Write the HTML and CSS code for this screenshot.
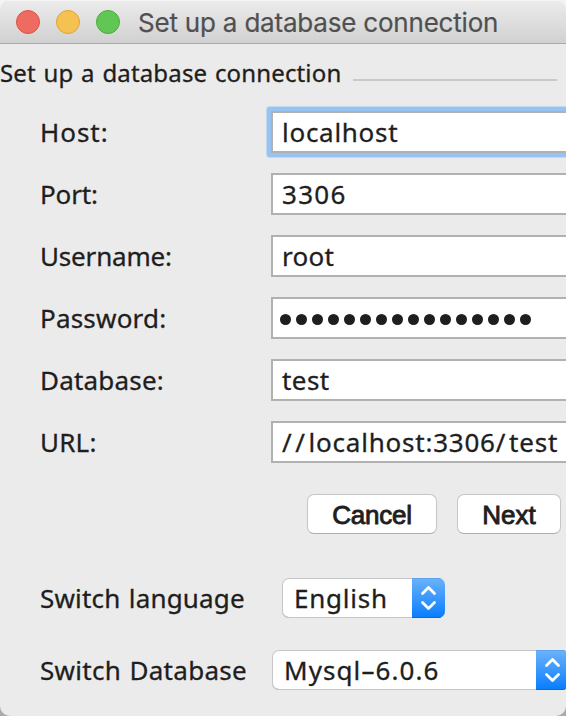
FILE: index.html
```html
<!DOCTYPE html>
<html lang="en">
<head>
<meta charset="utf-8">
<title>Set up a database connection</title>
<link rel="stylesheet" href="styles.css">
</head>
<body>
<div class="window">
  <header class="titlebar">
    <span class="light close"></span>
    <span class="light minimize"></span>
    <span class="light maximize"></span>
    <span class="title">Set up a database connection</span>
  </header>
  <div class="section">
    <span class="section-title">Set up a database connection</span>
    <span class="rule"></span>
  </div>
  <main class="form">
    <div class="row"><span class="label host-label">Host:</span><div class="field focused host">localhost</div></div>
    <div class="row"><span class="label port-label">Port:</span><div class="field port">3306</div></div>
    <div class="row"><span class="label user-label">Username:</span><div class="field user">root</div></div>
    <div class="row"><span class="label">Password:</span><div class="field password"><i></i><i></i><i></i><i></i><i></i><i></i><i></i><i></i><i></i><i></i><i></i><i></i><i></i><i></i><i></i><i></i></div></div>
    <div class="row"><span class="label">Database:</span><div class="field database">test</div></div>
    <div class="row"><span class="label">URL:</span><div class="field url"><span class="slash">//</span>localhost:3306<span class="slash">/</span>test</div></div>
  </main>
  <div class="buttons">
    <div class="button cancel">Cancel</div>
    <div class="button next">Next</div>
  </div>
  <div class="switch language">
    <span class="switch-label">Switch language</span>
    <div class="select">
      <span class="value">English</span>
      <span class="stepper"><svg width="33" height="40" viewBox="0 0 33 40"><path d="M10.5 15.5l6-6 6 6M10.5 24.5l6 6 6-6"/></svg></span>
    </div>
  </div>
  <div class="switch engine">
    <span class="switch-label">Switch Database</span>
    <div class="select">
      <span class="value">Mysql–6.0.6</span>
      <span class="stepper"><svg width="33" height="40" viewBox="0 0 33 40"><path d="M10.5 15.5l6-6 6 6M10.5 24.5l6 6 6-6"/></svg></span>
    </div>
  </div>
</div>
</body>
</html>
```
FILE: styles.css
```css
* { box-sizing: border-box; }
body {
  margin: 0;
  width: 566px;
  height: 716px;
  overflow: hidden;
  background: linear-gradient(#f4f4f4, #f4f4f4 50%, #a9a9a9 50%);
  font: 26px/40px "Noto Sans", "Liberation Sans", sans-serif;
  color: #1e1e1e;
  -webkit-text-stroke: 0.3px #1e1e1e;
}
.window {
  height: 716px;
  overflow: hidden;
  border-radius: 10px;
  background: #ebebeb;
  white-space: nowrap;
}
.titlebar {
  display: flex;
  align-items: center;
  gap: 16px;
  height: 44px;
  padding-left: 16px;
  border-bottom: 1px solid #ababab;
  background: linear-gradient(#ececec, #d1d1d1);
  box-shadow: inset 0 1px #f5f5f5;
}
.light {
  width: 24px;
  height: 24px;
  border-radius: 50%;
  border: 1px solid;
}
.close { background: #ed6b60; border-color: #dc5348; }
.minimize { background: #f5c151; border-color: #dea33a; }
.maximize { background: #62c655; border-color: #4cac3d; }
.title {
  margin: 2px 0 0 2px;
  font-family: Inter, sans-serif;
  letter-spacing: -0.2px;
  color: #505050;
  -webkit-text-stroke: 0.2px #505050;
}
.section {
  display: flex;
  align-items: center;
  height: 58px;
  padding-right: 9px;
}
.section-title {
  width: 352px;
  font-size: 24px;
  letter-spacing: 0.15px;
  word-spacing: 1.3px;
}
.rule { flex: 1; height: 2px; margin: 14px 0 0 1px; background: #c9c9c9; }
.form {
  display: grid;
  gap: 20px;
  margin-top: 9px;
  padding-left: 40px;
}
.row { display: flex; height: 42px; }
.label { width: 231px; line-height: 42px; letter-spacing: 0.2px; }
.host-label { letter-spacing: 0.95px; }
.port-label { letter-spacing: -0.15px; }
.user-label { letter-spacing: -0.18px; }
.field {
  flex: 1;
  height: 42px;
  padding-left: 9px;
  border: 2px solid #b1b1b1;
  border-right: 0;
  background: #fff;
  line-height: 38px;
}
.focused { box-shadow: 0 0 0 4px #97c3f3, 0 0 0 5px #c4d8ee; border-radius: 1px; }
.host { letter-spacing: 0.72px; }
.port { letter-spacing: 1.3px; }
.user { letter-spacing: 0.3px; }
.database { letter-spacing: 0.45px; }
.url { letter-spacing: 0.78px; }
.slash { letter-spacing: 3.6px; }
.password { display: flex; align-items: center; gap: 5px; padding: 3px 0 0 7px; }
.password i { width: 11px; height: 11px; border-radius: 50%; background: #1e1e1e; }
.buttons {
  display: flex;
  gap: 20px;
  margin: 31px 0 0 307px;
}
.button {
  height: 40px;
  border: 1px solid #c6c6c6;
  border-bottom-color: #adadad;
  border-radius: 7px;
  background: #fff;
  font-family: "Liberation Sans", sans-serif;
  line-height: 41px;
  text-align: center;
  -webkit-text-stroke: 0.9px #1e1e1e;
}
.cancel { width: 130px; letter-spacing: -0.2px; }
.next { width: 104px; }
.switch { display: flex; height: 40px; padding-left: 40px; }
.language { margin-top: 44px; }
.engine { margin-top: 32px; }
.switch-label { flex: none; width: 242px; letter-spacing: 0.18px; word-spacing: 1.4px; }
.engine .switch-label { width: 232px; letter-spacing: 0.28px; }
.select {
  display: flex;
  flex: none;
  width: 163px;
  border-radius: 7px;
  overflow: hidden;
  background: #fff;
  box-shadow: inset 0 0 0 1px #c6c6c6, inset 0 -1px #adadad;
}
.engine .select { width: 297px; }
.value { flex: 1; padding-left: 12px; letter-spacing: 0.75px; }
.engine .value { letter-spacing: 1.08px; }
.stepper {
  width: 33px;
  height: 40px;
  background: linear-gradient(#6cb3fa, #077dff);
  box-shadow: inset 0 1px #5ba3ee, inset 0 -1px #0368ea;
}
.stepper svg {
  display: block;
  fill: none;
  stroke: #fff;
  stroke-width: 2.8;
  stroke-linecap: round;
  stroke-linejoin: round;
}
```
